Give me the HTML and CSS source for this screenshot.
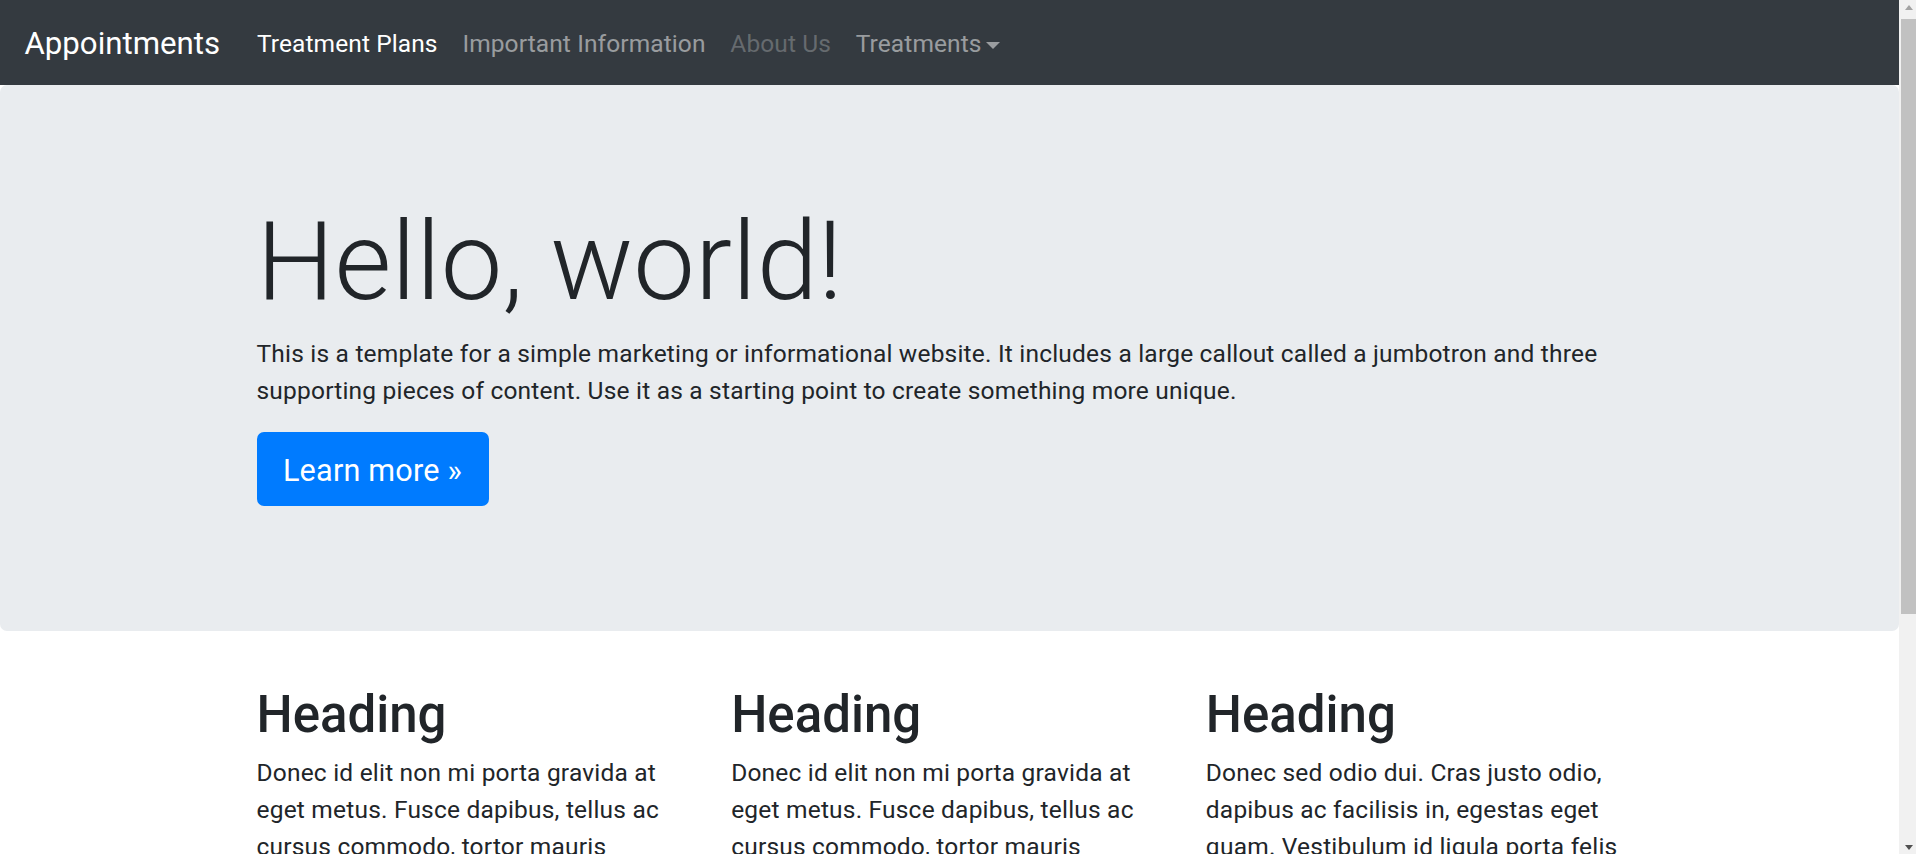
FILE: index.html
```html
<!DOCTYPE html>
<html lang="en">
<head>
<meta charset="utf-8">
<title>Appointments</title>
<link rel="stylesheet" href="styles.css">
</head>
<body>
<div class="page">
  <nav class="navbar">
    <a class="brand" href="#">Appointments</a>
    <ul class="nav">
      <li><a class="nav-link active" href="#">Treatment Plans</a></li>
      <li><a class="nav-link" href="#">Important Information</a></li>
      <li><a class="nav-link disabled" href="#">About Us</a></li>
      <li><a class="nav-link dropdown" href="#">Treatments<span class="caret"></span></a></li>
    </ul>
  </nav>
  <main>
    <section class="jumbotron">
      <div class="container">
        <h1 class="display">Hello, world!</h1>
        <p class="lead">This is a template for a simple marketing or informational website. It includes a large callout called a jumbotron and three supporting pieces of content. Use it as a starting point to create something more unique.</p>
        <div class="actions"><a class="btn btn-lg" href="#">Learn more »</a></div>
      </div>
    </section>
    <div class="container">
      <div class="row">
        <div class="col">
          <h2>Heading</h2>
          <p>Donec id elit non mi porta gravida at eget metus. Fusce dapibus, tellus ac cursus commodo, tortor mauris condimentum nibh, ut fermentum massa justo sit amet risus. Etiam porta sem malesuada magna mollis euismod. Donec sed odio dui.</p>
          <p><a class="btn btn-secondary" href="#">View details »</a></p>
        </div>
        <div class="col">
          <h2>Heading</h2>
          <p>Donec id elit non mi porta gravida at eget metus. Fusce dapibus, tellus ac cursus commodo, tortor mauris condimentum nibh, ut fermentum massa justo sit amet risus. Etiam porta sem malesuada magna mollis euismod. Donec sed odio dui.</p>
          <p><a class="btn btn-secondary" href="#">View details »</a></p>
        </div>
        <div class="col">
          <h2>Heading</h2>
          <p>Donec sed odio dui. Cras justo odio, dapibus ac facilisis in, egestas eget quam. Vestibulum id ligula porta felis euismod semper. Fusce dapibus, tellus ac cursus commodo, tortor mauris condimentum nibh, ut fermentum massa justo sit amet risus.</p>
          <p><a class="btn btn-secondary" href="#">View details »</a></p>
        </div>
      </div>
    </div>
  </main>
</div>
<div class="scrollbar" aria-hidden="true">
  <div class="sb-btn"><span class="arrow-up"></span></div>
  <div class="sb-thumb"></div>
  <div class="sb-space"></div>
  <div class="sb-btn"><span class="arrow-down"></span></div>
</div>
</body>
</html>
```

FILE: styles.css
```css
* { box-sizing: border-box; }
html, body { margin: 0; padding: 0; }
body {
  display: flex;
  height: 100vh;
  overflow: hidden;
  font-family: "Segoe UI", Roboto, "Noto Sans", sans-serif;
  font-size: 24.5px;
  line-height: 36.7px;
  letter-spacing: 0.2px;
  color: #212529;
  background: #fff;
}
.page { flex: 1; min-width: 0; overflow: hidden; }
a { text-decoration: none; }

.navbar {
  height: 85px;
  background: #343a40;
  display: flex;
  align-items: center;
  padding: 3px 24.5px 0;
}
.brand {
  color: #fff;
  font-size: 31.2px;
  letter-spacing: 0;
  margin-right: 24.5px;
  white-space: nowrap;
}
.nav { list-style: none; margin: 0; padding: 0; display: flex; }
.nav-link {
  display: block;
  padding: 0 12.4px;
  letter-spacing: 0.1px;
  color: rgba(255,255,255,.5);
  white-space: nowrap;
}
.nav-link.active { color: #fff; }
.nav-link.disabled { color: rgba(255,255,255,.25); }
.caret {
  display: inline-block;
  margin-left: 4px;
  vertical-align: 3px;
  border-top: 7.3px solid;
  border-left: 7.3px solid transparent;
  border-right: 7.3px solid transparent;
}

.container {
  width: 1424px;
  margin: 0 auto 0 calc(50% - 716px);
  padding: 0 23px;
}
.jumbotron {
  background: #e9ecef;
  border-radius: 7px;
  padding: 111px 0 125px;
  margin-bottom: 54px;
}
.display {
  font-size: 110px;
  font-weight: 300;
  letter-spacing: 0;
  line-height: 132px;
  margin: 0 0 8px;
}
.lead { margin: 0; }
.actions { margin-top: 22.7px; display: flex; }
.btn {
  display: inline-flex;
  align-items: center;
  justify-content: center;
  border-radius: 7px;
  white-space: nowrap;
}
.btn-lg {
  width: 232px;
  height: 74px;
  padding-top: 5px;
  background: #007bff;
  color: #fff;
  font-size: 30.6px;
}
.btn-secondary {
  background: #6c757d;
  color: #fff;
  padding: 9px 18px;
}

.row { display: flex; margin: 0 -23px; }
.col { flex: 1; padding: 0 23px; }
h2 {
  font-size: 51px;
  font-weight: 500;
  letter-spacing: 0;
  line-height: 60px;
  margin: 0 0 10.4px;
}
.col p { margin: 0 0 24.5px; }

.scrollbar {
  width: 17px;
  height: 100vh;
  background: #f1f1f1;
  display: flex;
  flex-direction: column;
  flex-shrink: 0;
}
.sb-btn {
  height: 17px;
  display: flex;
  align-items: center;
  justify-content: center;
  padding-left: 3px;
}
.arrow-up, .arrow-down {
  width: 0; height: 0;
  border-left: 4.5px solid transparent;
  border-right: 4.5px solid transparent;
}
.arrow-up { border-bottom: 5px solid #a3a3a3; margin-top: -2px; }
.arrow-down { border-top: 5px solid #505050; margin-top: 4px; }
.sb-thumb {
  margin: 2px 0 0 2px;
  height: 595px;
  background: #c1c1c1;
}
.sb-space { flex: 1; }
```
